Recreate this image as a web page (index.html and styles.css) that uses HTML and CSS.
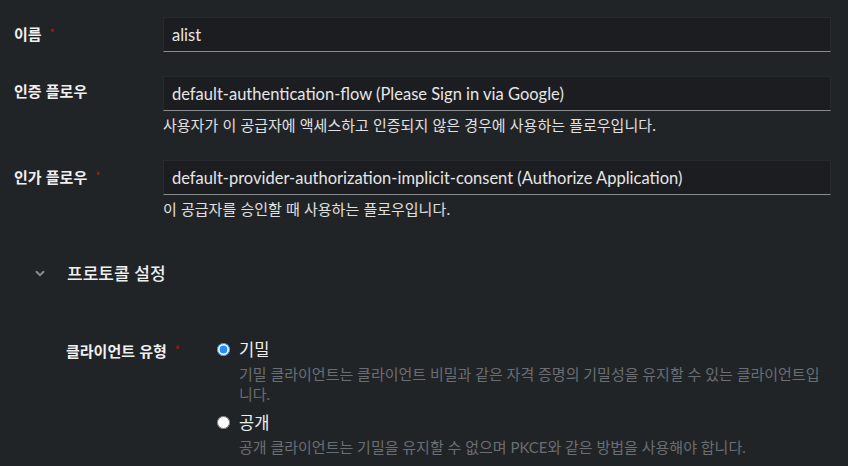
FILE: index.html
```html
<!DOCTYPE html>
<html lang="ko">
<head>
<meta charset="utf-8">
<link rel="stylesheet" href="styles.css">
</head>
<body>
<div class="form">
  <div class="row">
    <div class="label">이름<span class="req">*</span></div>
    <div class="field">
      <input class="input" type="text" value="alist" readonly>
    </div>
  </div>
  <div class="row">
    <div class="label">인증 플로우</div>
    <div class="field">
      <input class="input" type="text" value="default-authentication-flow (Please Sign in via Google)" readonly>
      <div class="help">사용자가 이 공급자에 액세스하고 인증되지 않은 경우에 사용하는 플로우입니다.</div>
    </div>
  </div>
  <div class="row">
    <div class="label">인가 플로우<span class="req">*</span></div>
    <div class="field">
      <input class="input" type="text" value="default-provider-authorization-implicit-consent (Authorize Application)" readonly>
      <div class="help">이 공급자를 승인할 때 사용하는 플로우입니다.</div>
    </div>
  </div>

  <div class="section">
    <svg class="chev" width="10" height="7" viewBox="0 0 10 7"><path d="M1 1.2 L5 5.2 L9 1.2" fill="none" stroke="#8a8d90" stroke-width="2"/></svg>
    <span class="section-title">프로토콜 설정</span>
  </div>

  <div class="client-row">
    <div class="client-label">클라이언트 유형<span class="req">*</span></div>
    <div class="radios">
      <div class="option">
        <input class="radio" type="radio" name="ct" checked>
        <span class="opt-label">기밀</span>
      </div>
      <div class="desc">기밀 클라이언트는 클라이언트 비밀과 같은 자격 증명의 기밀성을 유지할 수 있는 클라이언트입니다.</div>
      <div class="option second">
        <input class="radio" type="radio" name="ct">
        <span class="opt-label">공개</span>
      </div>
      <div class="desc">공개 클라이언트는 기밀을 유지할 수 없으며 PKCE와 같은 방법을 사용해야 합니다.</div>
    </div>
  </div>
</div>
</body>
</html>
```

FILE: styles.css
```css
html, body {
  margin: 0;
  background: #212427;
}

body {
  font-family: "Noto Sans CJK KR", "Noto Sans", sans-serif;
  color: #e0e0e0;
}

.form {
  padding: 17px 17px 0 14px;
}

.row {
  display: flex;
  margin-bottom: 24px;
}

.label {
  width: 149px;
  flex: none;
  padding-top: 5px;
  font-size: 15px;
  line-height: 20px;
  font-weight: 700;
  color: #f0f0f0;
}

.req {
  color: #b8190b;
  font-size: 11px;
  margin-left: 8px;
  vertical-align: 3px;
  font-weight: 400;
}

.field {
  flex: 1;
}

.input {
  display: block;
  width: 100%;
  box-sizing: border-box;
  height: 35px;
  margin: 0;
  padding: 0 8px;
  background: #1b1d21;
  border: 1px solid #26292d;
  border-bottom-color: #8a8d90;
  border-radius: 0;
  outline: none;
  font-family: Lato, "Noto Sans CJK KR", sans-serif;
  font-size: 16.5px;
  color: #e6e6e6;
}

.help {
  margin-top: 3px;
  font-size: 15px;
  line-height: 22px;
  color: #e0e0e0;
}

.section {
  display: flex;
  align-items: center;
  margin-top: 41px;
  padding-left: 21px;
  height: 24px;
}

.chev {
  flex: none;
  display: block;
}

.section-title {
  margin-left: 22px;
  font-size: 17px;
  line-height: 24px;
  font-weight: 500;
  color: #f0f0f0;
}

.client-row {
  display: flex;
  margin-top: 52px;
  padding-left: 52px;
}

.client-label {
  width: 151px;
  flex: none;
  padding-top: 2px;
  font-size: 15px;
  line-height: 20px;
  font-weight: 700;
  color: #f0f0f0;
}

.radios {
  flex: 1;
}

.option {
  display: flex;
  align-items: center;
  height: 24px;
}

.option.second {
  margin-top: 6px;
}

.radio {
  flex: none;
  width: 13px;
  height: 13px;
  margin: 0 9px 0 0;
  accent-color: #2b8af0;
}

.opt-label {
  font-size: 16.5px;
  line-height: 24px;
  color: #f0f0f0;
}

.desc {
  margin: 3px 8px 0 22px;
  font-family: Lato, "Noto Sans CJK KR", sans-serif;
  font-size: 15px;
  line-height: 20px;
  color: #6a6e73;
}
```
